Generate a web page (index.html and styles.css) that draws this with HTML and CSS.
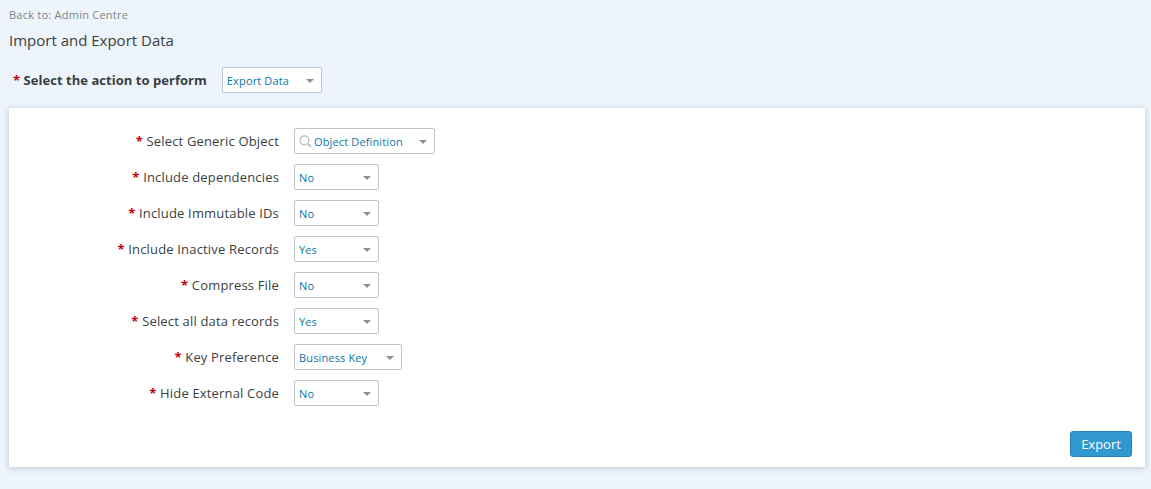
FILE: index.html
```html
<!DOCTYPE html>
<html lang="en">
<head>
<meta charset="utf-8">
<title>Import and Export Data</title>
<link rel="stylesheet" href="styles.css">
</head>
<body>
<div class="back">Back to: Admin Centre</div>
<h1 class="title">Import and Export Data</h1>
<div class="action">
  <span class="action-label"><span class="req">*</span> Select the action to perform</span>
  <div class="select w-action"><span class="val">Export Data</span><span class="caret"></span></div>
</div>
<main class="card">
  <div class="form">
    <div class="row">
      <div class="label"><span class="req">*</span> Select Generic Object</div>
      <div class="select w-object">
        <svg class="search" viewBox="0 0 14 14" width="13" height="13"><circle cx="5.8" cy="5.8" r="4.8" fill="none" stroke="#b4b8bb" stroke-width="1.2"/><path d="M9.2 9.2 13 13" stroke="#b4b8bb" stroke-width="1.6" fill="none"/></svg>
        <span class="val">Object Definition</span><span class="caret"></span>
      </div>
    </div>
    <div class="row"><div class="label"><span class="req">*</span> Include dependencies</div><div class="select w-short"><span class="val">No</span><span class="caret"></span></div></div>
    <div class="row"><div class="label"><span class="req">*</span> Include Immutable IDs</div><div class="select w-short"><span class="val">No</span><span class="caret"></span></div></div>
    <div class="row"><div class="label"><span class="req">*</span> Include Inactive Records</div><div class="select w-short"><span class="val">Yes</span><span class="caret"></span></div></div>
    <div class="row"><div class="label"><span class="req">*</span> Compress File</div><div class="select w-short"><span class="val">No</span><span class="caret"></span></div></div>
    <div class="row"><div class="label"><span class="req">*</span> Select all data records</div><div class="select w-short"><span class="val">Yes</span><span class="caret"></span></div></div>
    <div class="row"><div class="label"><span class="req">*</span> Key Preference</div><div class="select w-key"><span class="val">Business Key</span><span class="caret"></span></div></div>
    <div class="row"><div class="label"><span class="req">*</span> Hide External Code</div><div class="select w-short"><span class="val">No</span><span class="caret"></span></div></div>
  </div>
  <div class="footer"><button class="btn" type="button">Export</button></div>
</main>
</body>
</html>
```
FILE: styles.css
```css
* { box-sizing: border-box; }
html, body { height: 100%; }
body {
  margin: 0;
  padding: 0 6px 0 9px;
  background: #edf4fb;
  font-family: "Open Sans", "Noto Sans", sans-serif;
  color: #3a3f42;
  overflow: hidden;
}
.back {
  padding-top: 7px;
  height: 23px;
  font-size: 11px;
  line-height: 15px;
  letter-spacing: .24px;
  color: #7f8487;
}
.title {
  margin: 7px 0 0;
  height: 20px;
  font-size: 15px;
  line-height: 20px;
  font-weight: 400;
  color: #3a3f42;
}
.action {
  margin-top: 17px;
  padding-left: 4px;
  display: flex;
  align-items: center;
  gap: 15px;
  height: 26px;
}
.action-label {
  font-size: 13px;
  font-weight: 700;
  letter-spacing: .04px;
  color: #3a3f42;
}
.req { color: #c4000b; font-weight: 700; }
.select {
  height: 26px;
  display: flex;
  align-items: center;
  background: #fff;
  border: 1px solid #bfc5c9;
  border-radius: 2px;
  padding: 0 7px 0 4px;
  font-size: 11px;
  letter-spacing: .14px;
  color: #0a76a8;
}
.val { flex: 1; white-space: nowrap; }
.caret {
  width: 0;
  height: 0;
  margin-top: 2px;
  border-left: 4px solid transparent;
  border-right: 4px solid transparent;
  border-top: 4px solid #8a9296;
}
.w-action { width: 100px; }
.w-object { width: 141px; }
.w-short { width: 85px; }
.w-key { width: 108px; }
.search { margin-right: 2px; flex: none; }
.card {
  margin-top: 15px;
  height: 359px;
  background: #fff;
  box-shadow: 0 1px 6px rgba(90, 110, 130, .35);
  padding-top: 20px;
  display: flex;
  flex-direction: column;
  justify-content: space-between;
}
.form { display: flex; flex-direction: column; gap: 10px; }
.row { display: flex; align-items: center; gap: 15px; height: 26px; }
.label {
  width: 270px;
  text-align: right;
  font-size: 13px;
  letter-spacing: .17px;
  color: #3a3f42;
  white-space: nowrap;
}
.footer {
  display: flex;
  justify-content: flex-end;
  padding: 0 13px 10px 0;
}
.btn {
  width: 62px;
  height: 26px;
  padding: 0;
  border: 1px solid #1f86ba;
  border-radius: 3px;
  background: #3197cf;
  color: #fff;
  font: 400 13px "Open Sans", "Noto Sans", sans-serif;
}
```
